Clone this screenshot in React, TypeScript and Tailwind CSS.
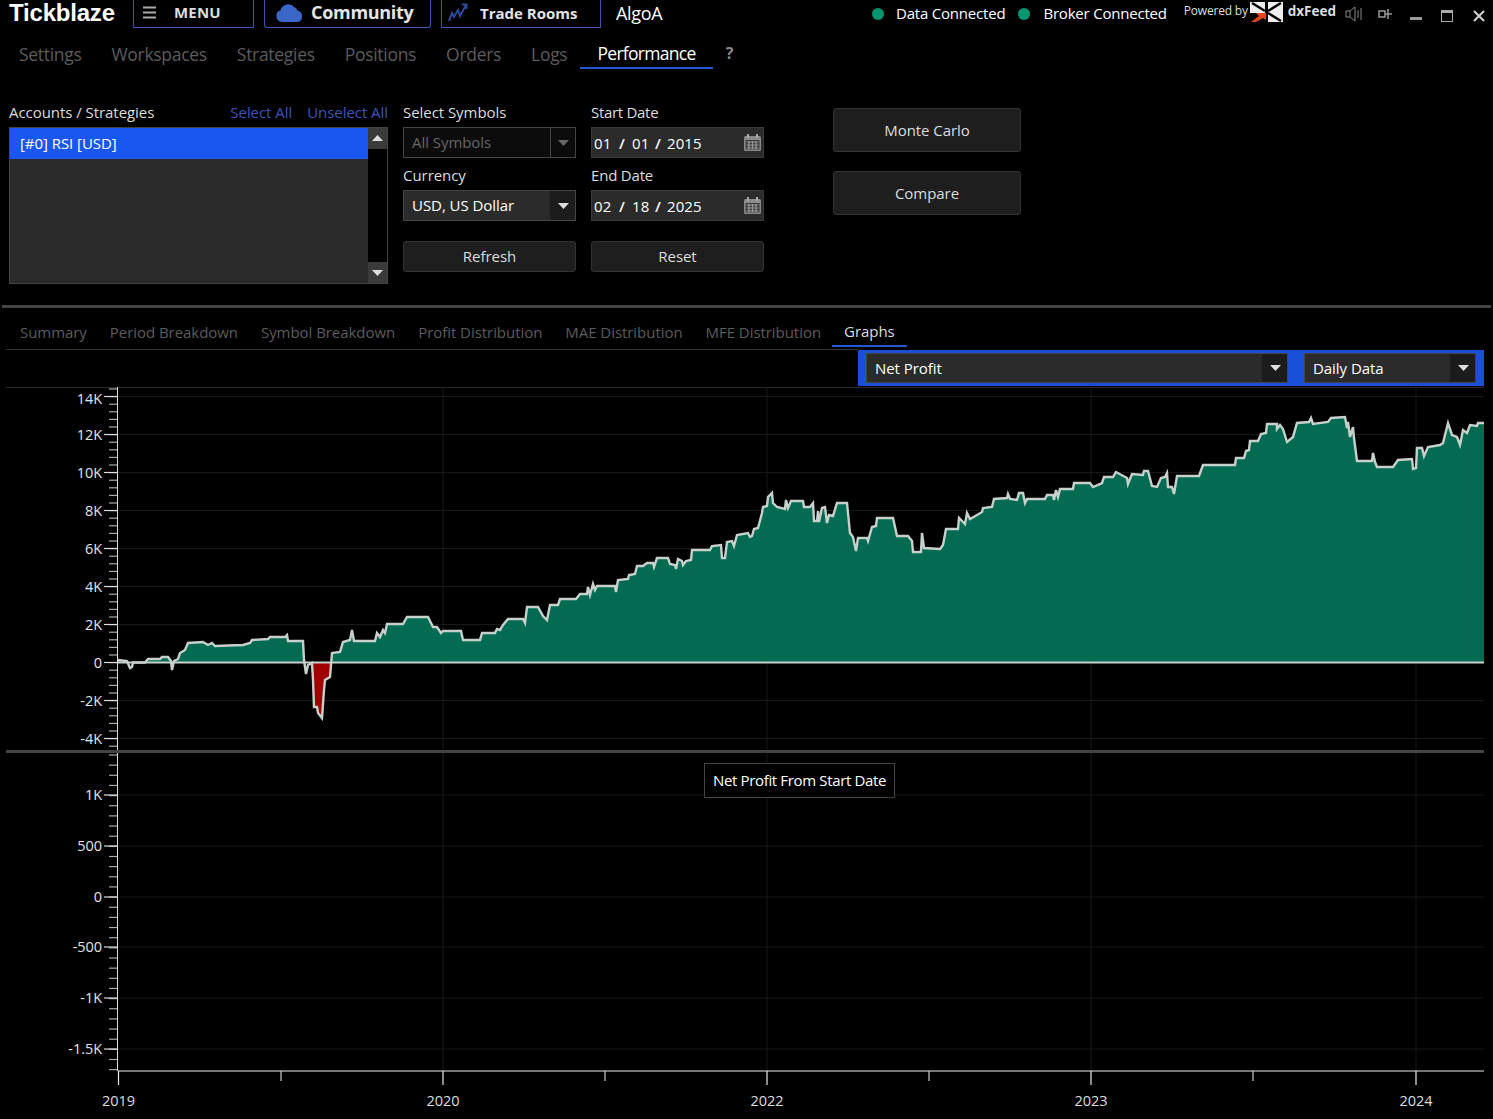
const NAV = ["Settings", "Workspaces", "Strategies", "Positions", "Orders", "Logs"];
const SUB_TABS = ["Summary", "Period Breakdown", "Symbol Breakdown", "Profit Distribution", "MAE Distribution", "MFE Distribution"];

const LINE =
  "118,660 127,661 130,668 132,667 133,662.5 145,662.5 148,659 160,659 162,657 168,657 171,661 172,670 174,661 178,659 180,653 185,650 188,643 203,642 208,645 212,643 215,646 243,645 250,643 252,640 268,639 270,637 285,637 287,635 288,641 303,641 304,660 306,674 308,665 312,663 313,680 314,707 317,707 318,713 322,718 324,690 325,680 330,677 332,653 340,652 343,642 350,640 352,630 354,641 375,641 377,633 380,637 383,630 385,633 387,624 403,624 407,617 428,617 433,627 437,627 441,633 443,631 461,631 463,640 480,640 482,633 495,633 497,629 500,630 503,625 508,619 523,619 525,623 527,607 538,607 543,616 547,620 550,605 558,605 560,599 576,599 580,594 587,594 588,587 590,595 593,584 595,590 597,586 615,586 616,592 618,580 628,579 629,575 635,574 637,566 643,566 647,563 653,563 654,567 657,558 668,558 670,564 675,565 676,569 678,559 682,561 683,565 686,561 691,560 692,550 710,550 712,546 721,545 722,558 725,558 727,542 732,541 734,546 737,535 748,533 750,537 752,536 754,529 758,528 762,513 763,507 767,506 768,497 772,493 773,503 777,507 785,509 786,500 788,508 791,501 803,501 804,507 810,507 813,503 814,521 817,521 818,511 819,522 822,508 825,507 827,523 829,515 833,516 837,503 847,503 850,533 853,537 856,551 858,538 867,538 868,541 872,527 876,526 877,518 893,518 897,536 908,536 912,541 913,552 921,552 922,533 924,548 940,549 943,545 946,529 958,529 959,518 965,524 967,513 970,519 977,515 982,512 983,508 992,507 994,499 1007,498 1008,494 1010,499 1017,500 1019,493 1023,493 1025,503 1027,499 1045,499 1047,495 1053,495 1054,500 1056,490 1058,497 1060,489 1073,489 1074,483 1090,483 1093,487 1102,483 1104,477 1113,477 1116,472 1127,478 1128,484 1132,474 1143,475 1144,471 1148,471 1152,486 1157,487 1161,478 1165,477 1167,473 1168,487 1172,487 1174,494 1177,476 1199,476 1203,465 1235,465 1236,458 1244,458 1246,451 1249,450 1250,441 1258,441 1261,434 1266,433 1267,424 1277,424 1277,429 1280,425 1283,429 1287,442 1293,437 1297,423 1309,422 1311,418 1313,424 1328,422 1331,418 1345,417 1347,428 1348,422 1350,437 1353,427 1354,438 1357,461 1372,461 1373,453 1375,462 1377,467 1393,467 1398,460 1412,459 1413,469 1416,468 1417,448 1422,448 1424,456 1428,447 1440,445 1443,443 1448,423 1452,435 1457,437 1460,445 1463,430 1467,433 1470,425 1477,426 1478,423 1484,423";

const YEARS = [
  { x: 118.5, label: "2019" },
  { x: 443, label: "2020" },
  { x: 767, label: "2022" },
  { x: 1091, label: "2023" },
  { x: 1416, label: "2024" },
];
const HALF_YEARS = [281, 605, 929, 1253];

const TOP_LABELS = [
  { y: 396.5, label: "14K", ty: 399 },
  { y: 434.5, label: "12K" },
  { y: 472.5, label: "10K" },
  { y: 510.5, label: "8K" },
  { y: 548.5, label: "6K" },
  { y: 586.5, label: "4K" },
  { y: 624.5, label: "2K" },
  { y: 662.5, label: "0" },
  { y: 700.5, label: "-2K" },
  { y: 738.5, label: "-4K" },
];
const BOTTOM_LABELS = [
  { y: 795, label: "1K" },
  { y: 846, label: "500" },
  { y: 897, label: "0" },
  { y: 947, label: "-500" },
  { y: 998, label: "-1K" },
  { y: 1049, label: "-1.5K" },
];

function minorTicks(start: number, end: number, step: number) {
  const out: number[] = [];
  for (let y = start; y <= end; y += step) out.push(y);
  return out;
}

function Caret({ dim }: { dim?: boolean }) {
  return (
    <svg width="11" height="6" viewBox="0 0 11 6">
      <path d="M0 0h11L5.500 6z" fill={dim ? "#666" : "#ddd"} />
    </svg>
  );
}

function Select({ value, disabled, className }: { value: string; disabled?: boolean; className: string }) {
  return (
    <div className={`flex border border-[#444] ${disabled ? "bg-[#0c0c0c] text-[#666]" : "bg-[#2b2b2b] text-white"} ${className}`}>
      <div className="flex-1 pl-2 flex items-center">{value}</div>
      <div className={`w-[25px] pl-[1px] flex items-center justify-center ${disabled ? "border-l border-[#444]" : "bg-[#1c1c1c]"}`}>
        <Caret dim={disabled} />
      </div>
    </div>
  );
}

function CalendarIcon() {
  return (
    <svg width="19" height="19" viewBox="0 0 19 19" fill="none">
      <rect x="1" y="3" width="17" height="15" rx="1.500" fill="#8a8a8a" />
      <rect x="4" y="1" width="2" height="4" fill="#aaa" />
      <rect x="13" y="1" width="2" height="4" fill="#aaa" />
      <path d="M2.500 7h14v9.500h-14z" fill="#3a3a3a" />
      <path d="M3.500 9h12M3.500 12h12M3.500 15h12M6 8v8M9.500 8v8M13 8v8" stroke="#999" strokeWidth="1.200" />
    </svg>
  );
}

function DateField({ month, day, year }: { month: string; day: string; year: string }) {
  return (
    <div className="h-[31px] bg-[#2b2b2b] border border-[#3a3a3a] flex items-center pl-[2px] pr-[1px] text-white tracking-[0.1px]">
      <span className="w-[20px] pt-[2px]">{month}</span>
      <span className="w-[16px] pt-[2px] text-center font-semibold">/</span>
      <span className="w-[18px] ml-[2px] pt-[2px]">{day}</span>
      <span className="w-[16px] pt-[2px] text-center font-semibold">/</span>
      <span className="ml-[1px] pt-[2px]">{year}</span>
      <span className="ml-auto flex">
        <CalendarIcon />
      </span>
    </div>
  );
}

function ActionButton({ label, className }: { label: string; className: string }) {
  return (
    <div className={`flex items-center justify-center rounded-[3px] bg-[#1e1e1e] border border-[#333] text-[#ddd] ${className}`}>
      {label}
    </div>
  );
}

function YAxis({ labels, ticks }: { labels: { y: number; label: string; ty?: number }[]; ticks: number[] }) {
  return (
    <>
      {labels.map((l) => (
        <line key={l.label} x1="118" x2="1484" y1={l.y} y2={l.y} stroke="#191919" />
      ))}
      {YEARS.slice(1).map((y) => (
        <line key={y.x} x1={y.x} x2={y.x} y1="380" y2="1071" stroke="#191919" />
      ))}
      <line x1="117.500" x2="117.500" y1="380" y2="1071" stroke="#ddd" />
      {ticks.map((y) => (
        <line key={y} x1="109" x2="117" y1={y} y2={y} stroke="#aaa" strokeWidth="1.200" />
      ))}
      {labels.map((l) => (
        <g key={l.label}>
          <line x1="104" x2="117" y1={l.y} y2={l.y} stroke="#ddd" strokeWidth="1.200" />
          <text x="102" y={(l.ty ?? l.y) + 5} textAnchor="end" fontSize="14.500" fill="#e4e4e4">
            {l.label}
          </text>
        </g>
      ))}
    </>
  );
}

function TopChart() {
  const area = `${LINE} 1484,662.5 118,662.5`;
  return (
    <svg className="block w-[1493px] h-[363px]" viewBox="0 387 1493 363">
      <defs>
        <clipPath id="above">
          <rect x="118" y="387" width="1366" height="275.500" />
        </clipPath>
        <clipPath id="below">
          <rect x="312" y="662.500" width="20" height="80" />
        </clipPath>
      </defs>
      <line x1="6" x2="1484" y1="387.500" y2="387.500" stroke="#2a2a2a" />
      <YAxis labels={TOP_LABELS} ticks={minorTicks(389, 750, 7.6)} />
      <polygon points={area} fill="#026b52" clipPath="url(#above)" />
      <polygon points={area} fill="#a00000" clipPath="url(#below)" />
      <polyline points={LINE} fill="none" stroke="#c8d0cc" strokeWidth="2.400" />
      <line x1="118" x2="1484" y1="662.500" y2="662.500" stroke="#c8d0cc" strokeWidth="2" />
    </svg>
  );
}

function BottomChart() {
  return (
    <svg className="block w-[1493px] h-[366px]" viewBox="0 753 1493 366">
      <YAxis labels={BOTTOM_LABELS} ticks={minorTicks(755, 1070, 10.15)} />
      <line x1="118" x2="1484" y1="1071" y2="1071" stroke="#eee" strokeWidth="1.200" />
      {HALF_YEARS.map((x) => (
        <line key={x} x1={x} x2={x} y1="1071" y2="1081" stroke="#ccc" strokeWidth="1.200" />
      ))}
      {YEARS.map((y) => (
        <g key={y.x}>
          <line x1={y.x} x2={y.x} y1="1071" y2="1085" stroke="#eee" strokeWidth="1.200" />
          <text x={y.x} y="1106" textAnchor="middle" fontSize="14.500" fill="#ddd">
            {y.label}
          </text>
        </g>
      ))}
    </svg>
  );
}

function DxFeedLogo() {
  return (
    <svg width="33" height="20" viewBox="0 0 33 20">
      <rect width="33" height="20" fill="#eee" />
      <path d="M2 1l13 8M31 1L18 9M31 19L18 11" stroke="#000" strokeWidth="2.400" />
      <path d="M15 0h3v20h-3z" fill="#000" />
      <path d="M0 9l6 4M0 11v9h15v-9z" fill="#000" />
      <path d="M1 20l8-6-3-3h10v7l-3-2-7 4z" fill="#e2451d" />
    </svg>
  );
}

export default function App() {
  return (
    <div className="w-[1493px] h-[1119px] overflow-hidden bg-black text-[15px] tracking-[-0.05px] text-[#ddd] font-['Open_Sans',sans-serif] relative">
      {/* Title bar */}
      <header className="h-[28px] flex items-start pl-[9px]">
        <div className="font-['Liberation_Sans',sans-serif] font-bold text-[24px] tracking-[-0.2px] leading-[25px] text-white w-[124px]">Tickblaze</div>
        <div className="w-[121px] h-[28px] border-x border-b border-[#3c54b4] flex items-center pl-[9px] pb-[3px] font-bold text-[15px] tracking-[0.2px] text-[#ddd]">
          <svg width="13" height="13" viewBox="0 0 13 13">
            <path d="M0 1.500h13M0 6.500h13M0 11.500h13" stroke="#aaa" strokeWidth="2" />
          </svg>
          <span className="ml-[18px]">MENU</span>
        </div>
        <div className="ml-[10px] w-[167px] h-[28px] border-x border-b border-[#3c54b4] rounded-b-[3px] flex items-center pl-[11px] pb-[3px] font-bold text-[18px] tracking-[-0.3px] text-[#e4e4e4]">
          <svg width="28" height="19" viewBox="0 0 28 19">
            <path d="M6 19a6 6 0 0 1-1.500-11.700A8 8 0 0 1 18.500 4.300a5.500 5.500 0 0 1 3 3.200A6 6 0 0 1 22 19z" fill="#3a66c8" />
          </svg>
          <span className="ml-[7px]">Community</span>
        </div>
        <div className="ml-[10px] w-[160px] h-[28px] border-x border-b border-[#3c54b4] flex items-center pl-[6px] pb-[1px] font-bold text-[15px] tracking-normal text-[#e4e4e4]">
          <svg width="20" height="20" viewBox="0 0 20 20" fill="none" stroke="#2f4a9c" strokeWidth="2">
            <path d="M1 18l3-8 2 4 4-7 2 6 6-11" />
            <path d="M14 1.500h4.500V6" />
          </svg>
          <span className="ml-[12px]">Trade Rooms</span>
        </div>
        <div className="ml-[15px] text-[18px] leading-[26px] tracking-[-0.3px] text-white">AlgoA</div>
        <div className="ml-auto flex items-center h-[27px] text-white">
          <span className="w-[12px] h-[12px] rounded-full bg-[#04976f]" />
          <span className="ml-[12px] tracking-[-0.2px]">Data Connected</span>
          <span className="ml-[13px] w-[12px] h-[12px] rounded-full bg-[#04976f]" />
          <span className="ml-[13px] tracking-[-0.2px]">Broker Connected</span>
          <span className="ml-[17px] mb-[6px] text-[12px] tracking-[-0.2px] text-[#ddd]">Powered by</span>
          <span className="flex mb-[3px] ml-[2px]">
            <DxFeedLogo />
          </span>
          <span className="ml-[5px] mb-[5px] font-bold text-[13.500px] tracking-normal text-[#ddd]">dxFeed</span>
          <svg className="ml-[9px]" width="18" height="18" viewBox="0 0 18 18" fill="none" stroke="#888">
            <path d="M1 6h4l5-4v14l-5-4H1zM5 6v6M13 5v8M16 3v12" />
          </svg>
          <svg className="ml-[15px]" width="15" height="12" viewBox="0 0 15 12" fill="none" stroke="#999" strokeWidth="1.500">
            <path d="M1 3h6v6H1zM7 6h7M10 1v10" />
          </svg>
          <span className="ml-[17px] mt-[10px] w-[12px] h-[3px] bg-[#999]" />
          <span className="ml-[19px] mt-[5px] w-[12px] h-[12px] border border-[#aaa] border-t-[3px]" />
          <svg className="ml-[20px] mr-[8px] mt-[5px]" width="12" height="12" viewBox="0 0 12 12" stroke="#ccc" strokeWidth="2.200">
            <path d="M1 1l10 10M11 1L1 11" />
          </svg>
        </div>
      </header>

      {/* Main tabs */}
      <nav className="h-[42px] flex items-start pl-[19px] text-[17.500px] tracking-[-0.3px] text-[#5c5c5c]">
        <div className="flex gap-[30px] pt-[13px]">
          {NAV.map((n) => (
            <span key={n}>{n}</span>
          ))}
        </div>
        <div className="ml-[13px] px-[17px] h-[41px] pt-[12px] border-b-2 border-[#2456d8] tracking-[-0.7px] text-white">Performance</div>
        <span className="ml-[13px] pt-[13px] font-bold text-[16px] text-[#888]">?</span>
      </nav>

      {/* Filters */}
      <section className="h-[235px] pt-[30px] pl-[9px] flex">
        <div className="w-[379px]">
          <div className="h-[27px] flex gap-[15px] pt-[1px]">
            <span className="flex-1">Accounts / Strategies</span>
            <span className="text-[#3d55b8]">Select All</span>
            <span className="text-[#3d55b8]">Unselect All</span>
          </div>
          <div className="h-[157px] flex bg-[#2b2b2b] border border-[#444]">
            <div className="flex-1">
              <div className="h-[31px] pl-[10px] flex items-center bg-[#1a56f0] text-white">[#0] RSI [USD]</div>
            </div>
            <div className="w-[19px] bg-black flex flex-col justify-between">
              <div className="h-[21px] bg-[#3a3a3a] flex items-center justify-center rotate-180">
                <Caret />
              </div>
              <div className="h-[21px] bg-[#3a3a3a] flex items-center justify-center">
                <Caret />
              </div>
            </div>
          </div>
        </div>

        <div className="ml-[15px] w-[173px] flex flex-col">
          <div className="h-[27px] pt-[1px]">Select Symbols</div>
          <Select value="All Symbols" disabled className="h-[31px]" />
          <div className="h-[32px] pt-[6px]">Currency</div>
          <Select value="USD, US Dollar" className="h-[31px]" />
          <ActionButton label="Refresh" className="mt-[20px] h-[31px]" />
        </div>

        <div className="ml-[15px] w-[173px] flex flex-col">
          <div className="h-[27px] pt-[1px] tracking-[-0.3px]">Start Date</div>
          <DateField month="01" day="01" year="2015" />
          <div className="h-[32px] pt-[6px] tracking-[-0.2px]">End Date</div>
          <DateField month="02" day="18" year="2025" />
          <ActionButton label="Reset" className="mt-[20px] h-[31px]" />
        </div>

        <div className="ml-[69px] w-[188px] mt-[8px] flex flex-col gap-[19px]">
          <ActionButton label="Monte Carlo" className="h-[44px]" />
          <ActionButton label="Compare" className="h-[44px]" />
        </div>
      </section>

      <div className="h-[3px] mx-[2px] bg-[#444]" />

      {/* Report tabs */}
      <div className="h-[42px] ml-[6px] mr-[635px] border-b border-[#333] flex items-start pl-[14px] text-[#5c5c5c] whitespace-nowrap">
        <div className="flex gap-[23px] pt-[13px]">
          {SUB_TABS.map((t) => (
            <span key={t}>{t}</span>
          ))}
        </div>
        <div className="ml-[11px] px-[12px] h-[39px] pt-[12px] border-b-2 border-[#2456d8] text-[#ddd]">Graphs</div>
      </div>

      {/* Graph options */}
      <div className="h-[37px] flex justify-end pr-[9px]">
        <div className="w-[626px] h-[36px] bg-[#1a4fd8] flex gap-[16px] pl-[8px] pr-[8px] py-[3px]">
          <Select value="Net Profit" className="flex-1 h-[30px]" />
          <Select value="Daily Data" className="w-[172px] h-[30px]" />
        </div>
      </div>

      <TopChart />
      <div className="h-[3px] mx-[6px] w-[1478px] bg-[#444]" />
      <BottomChart />

      <div className="absolute left-[704px] top-[763px] h-[35px] px-[8px] flex items-center border border-[#444] bg-black tracking-[-0.35px] text-white">
        Net Profit From Start Date
      </div>
    </div>
  );
}
